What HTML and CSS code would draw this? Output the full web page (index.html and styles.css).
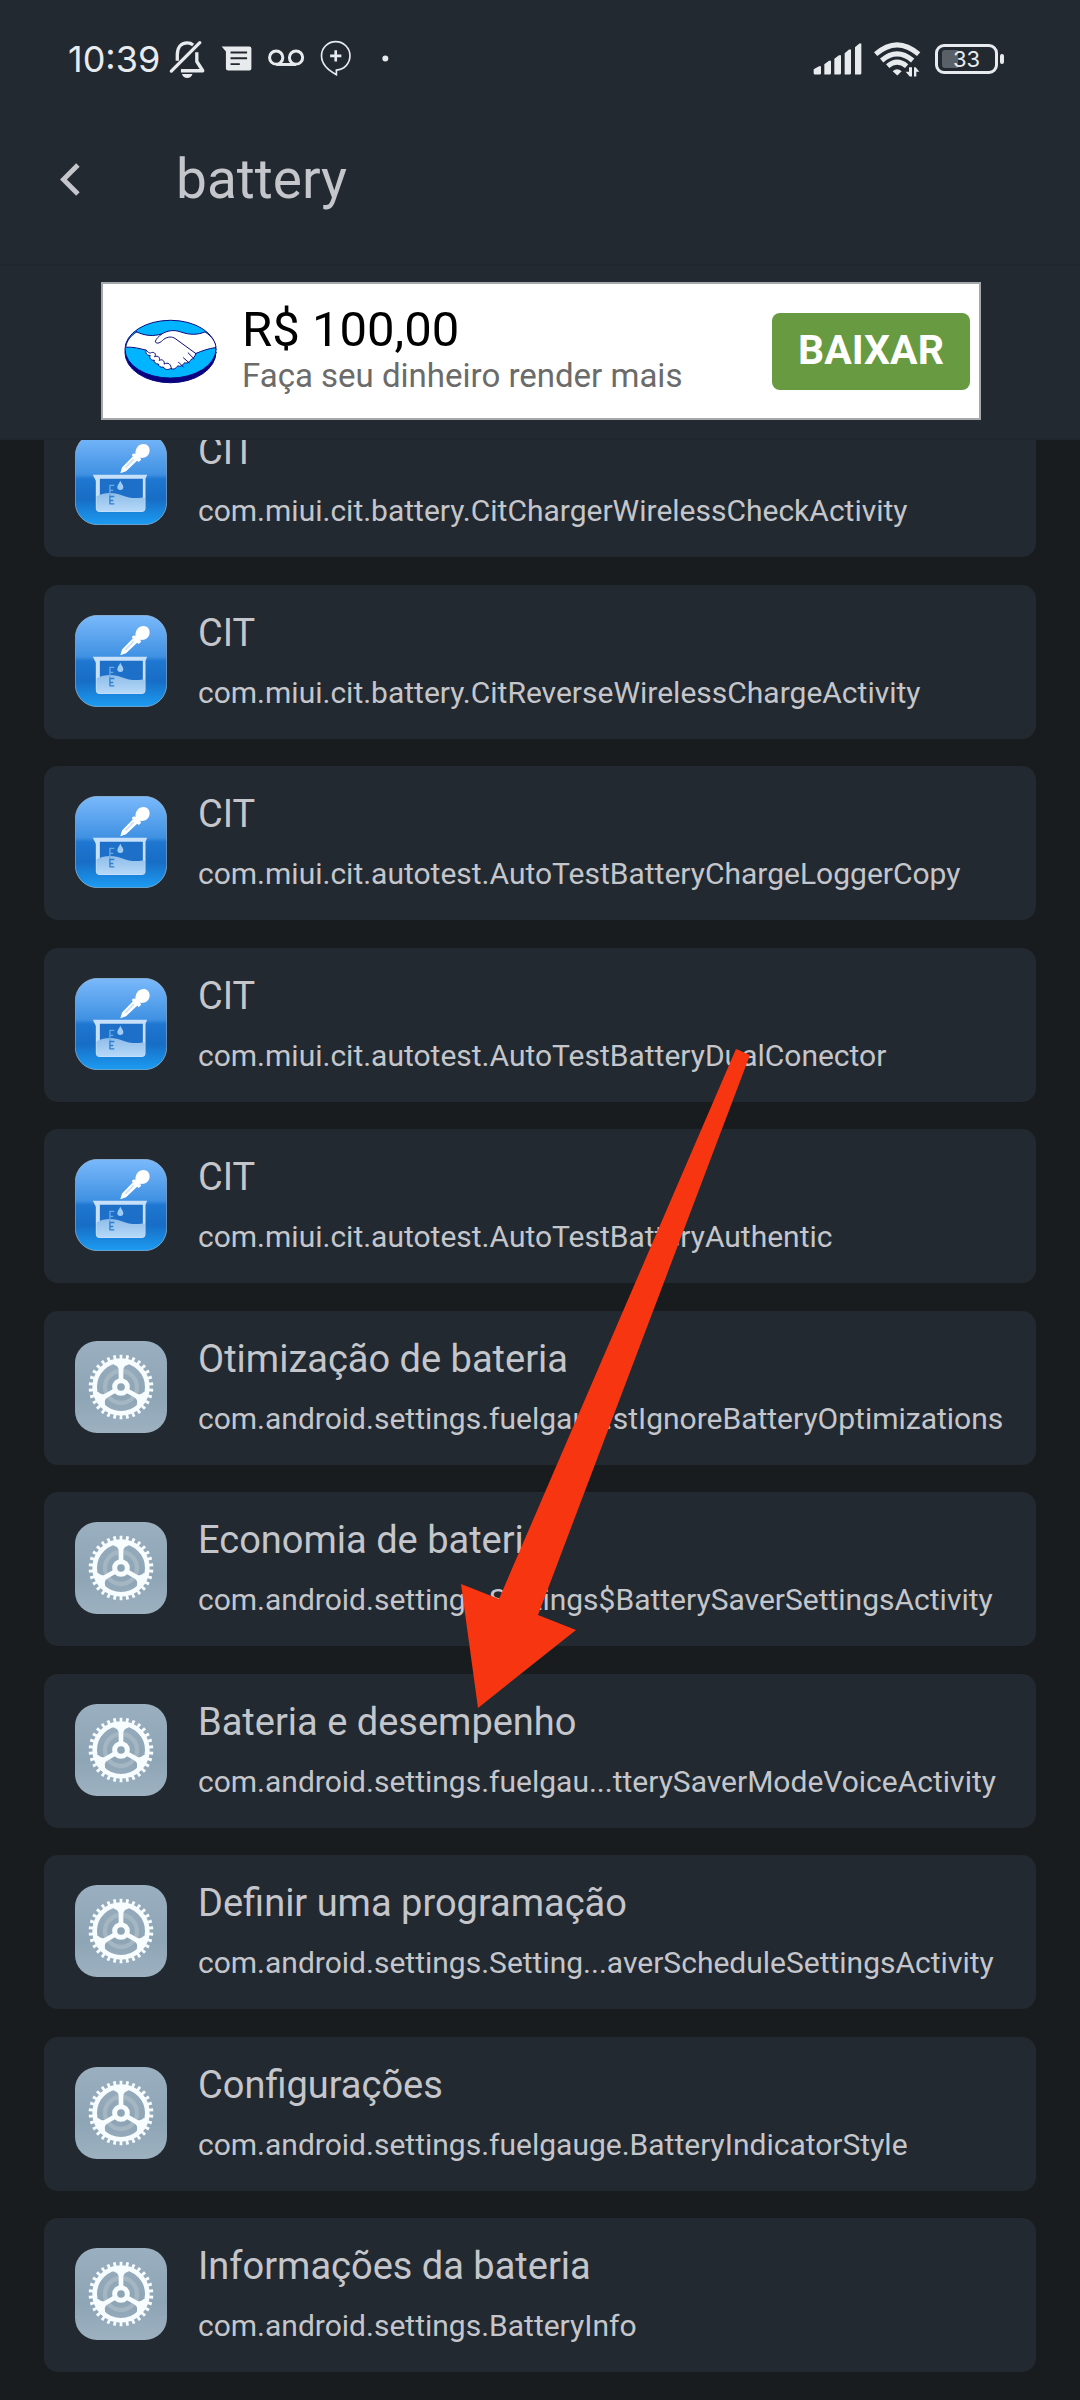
FILE: index.html
```html
<!DOCTYPE html>
<html lang="pt-BR">
<head>
<meta charset="utf-8">
<meta name="viewport" content="width=device-width, initial-scale=1">
<title>battery</title>
<link rel="stylesheet" href="styles.css">
</head>
<body>
<svg class="defs" aria-hidden="true">
  <defs>
    <linearGradient id="sky" x1="0" y1="0" x2="0" y2="1">
      <stop offset="0" stop-color="#7ab9fb"/><stop offset=".45" stop-color="#4091e3"/>
      <stop offset=".5" stop-color="#1f77d1"/><stop offset=".72" stop-color="#186dc5"/><stop offset="1" stop-color="#1c9cf2"/>
    </linearGradient>
    <linearGradient id="water" x1="0" y1="0" x2="0" y2="1">
      <stop offset="0" stop-color="#8fbde9"/><stop offset="1" stop-color="#b5d8f8"/>
    </linearGradient>
    <linearGradient id="steel" x1="0" y1="0" x2="0" y2="1">
      <stop offset="0" stop-color="#9aafbf"/><stop offset=".6" stop-color="#8ea5b6"/><stop offset="1" stop-color="#9db1c0"/>
    </linearGradient>
    <symbol id="cit" viewBox="46 48 274 274">
      <rect x="47" y="49" width="272" height="272" rx="66" fill="url(#sky)" stroke="#9dbbd8" stroke-width="2"/>
      <path d="M181 168l5-17 32-33-3-5 7-5 4 3c-1-18 10-30 24-30 12 0 20 10 18 22-2 13-13 21-28 19l3 6-7 6-5-3-33 31z" fill="#fff"/>
      <path d="M194 150l25-26 4 4-25 26z" fill="#cfe4fa"/>
      <path d="M99 172h162l-5 12v87q0 12-12 12H120q-12 0-12-12v-81z" fill="#c6e0fa"/>
      <path d="M120 184h128v88H120z" fill="#1d6fc8"/>
      <path d="M110 237c34-18 62-8 86 0 20 7 35 5 52 3h6v31q0 10-10 10H120q-10 0-10-10z" fill="url(#water)"/>
      <path d="M163 204h-13v30M150 219h10" fill="none" stroke="#6aa9e4" stroke-width="4"/>
      <path d="M150 234v26M150 237h13M150 249h10M150 259h13" fill="none" stroke="#2f7fd0" stroke-width="4"/>
      <path d="M181 190c5 10 9 14 9 19a9 9 0 0 1-18 0c0-5 4-9 9-19z" fill="#9fcbf5"/>
    </symbol>
    <symbol id="gear" viewBox="45 66 276 276">
      <rect x="45" y="66" width="276" height="276" rx="66" fill="url(#steel)"/>
      <circle cx="183" cy="204" r="48" fill="none" stroke="#a5b6c3" stroke-width="13"/>
      <circle cx="183" cy="204" r="79" fill="none" stroke="#f7fcff" stroke-width="14"/>
      <circle cx="183" cy="204" r="90" fill="none" stroke="#f7fcff" stroke-width="14" pathLength="300" stroke-dasharray="4.4 5.6" stroke-dashoffset="7.2"/>
      <g fill="#f7fcff">
        <path id="arm" d="M176 182v-30q-1-12-14-15l-8-14h58l-8 14q-13 3-14 15v30z"/>
        <use href="#arm" transform="rotate(120 183 204)"/>
        <use href="#arm" transform="rotate(240 183 204)"/>
      </g>
      <circle cx="183" cy="204" r="19" fill="#8ea5b6" stroke="#f7fcff" stroke-width="15"/>
    </symbol>
  </defs>
</svg>

<header class="top">
  <div class="status">
    <span class="clock">10:39</span>
    <svg class="glyphs" viewBox="380 55 670 130" aria-hidden="true" fill="none" stroke="#e8ebee">
      <path d="M388 155l86-86" stroke-width="10" stroke-linecap="round"/>
      <path d="M406 124v-18c0-22 10-36 30-36 8 0 13 2 18 6M465 98v28l18 28h-66" stroke-width="10" stroke-linejoin="round"/>
      <path d="M420 164h32q-4 12-16 12t-16-12z" fill="#e8ebee" stroke="none"/>
      <path d="M540 81h84q6 0 6 6v60q0 6-6 6h-64q-7 0-7-6v-51z" fill="#e8ebee" stroke="none"/>
      <path d="M567 99h50M567 116h50M567 134h28" stroke="#222930" stroke-width="6"/>
      <circle cx="705" cy="114" r="20" stroke-width="9"/><circle cx="765" cy="114" r="20" stroke-width="9"/>
      <path d="M705 135h60" stroke-width="9"/>
      <path d="M887 166v-14c24-2 41-20 41-43 0-24-19-43-43-43s-43 19-43 43c0 28 24 46 45 57z" stroke-width="5"/>
      <path d="M885 92v34M868 109h34" stroke-width="8"/>
      <circle cx="1035" cy="117" r="9" fill="#e8ebee" stroke="none"/>
    </svg>
    <span class="spacer"></span>
    <svg class="signal" viewBox="98 65 324 110" aria-hidden="true" fill="#e8ebee">
      <path d="M100 164v-15l16-9h6v21q0 4-4 4h-14q-4 0-4-4zM132 164v-30l14-10h6v37q0 4-4 4h-16zM162 164v-46l14-11h6v54q0 4-4 4h-16zM193 164v-63l13-11h6v71q0 4-4 4h-15zM224 164v-81l13-11h6v89q0 4-4 4h-15z"/>
      <g fill="none" stroke="#e8ebee" stroke-width="15">
        <path d="M286 104q64-56 129 0M304 123q46-40 93 0M322 140q28-24 57 0"/>
      </g>
      <path d="M337 155q13-11 27 0l-13 13z"/>
      <path d="M386 143h9v28h-7l-12-14h10zM401 171v-28h5l11 14h-9v14z"/>
    </svg>
    <span class="battery"><span class="level">33</span></span>
  </div>
  <div class="search">
    <button class="back" type="button" aria-label="Voltar">
      <svg viewBox="0 0 60 100" aria-hidden="true"><path d="M54 6L10 50l44 44" fill="none" stroke="#c4c6cb" stroke-width="15"/></svg>
    </button>
    <input class="query" type="text" value="battery" aria-label="Pesquisar">
  </div>
  <div class="banner">
    <div class="ad">
      <svg class="logo" viewBox="100 146 280 194" aria-hidden="true" stroke="#0a0a80" stroke-width="3" stroke-linejoin="round" stroke-linecap="round">
        <ellipse cx="240" cy="246" rx="137" ry="91" fill="#0a0080"/>
        <ellipse cx="240" cy="236" rx="137" ry="87" fill="#00b4ff"/>
        <path d="M138 184c25 12 50 14 76 6 16-9 34-14 56-6 30 10 52 9 74 0 22 15 31 29 33 47-22 3-40 9-61 18-2 10-8 16-14 18-6 10-13 12-20 10-6 10-14 12-20 9-6 9-14 12-22 8-8 6-18 3-21-4-9 2-15-3-15-9-9 0-14-6-13-12-9 2-16-6-12-14-10 0-15-6-12-16-20-5-38-10-62-9 3-18 13-33 33-46z" fill="#fff"/>
        <path d="M214 190c-10 8-18 15-20 24 7 8 16 2 25-7 13-10 26-9 35-3l62 45M167 239c6 9 14 10 16 7 10-2 15 6 9 13 10-5 18 2 14 11 8-5 17 0 15 11 12-7 20 0 22 14M264 275l15 15M279 262l18 16M293 247l18 18" fill="none"/>
      </svg>
      <div class="pitch">
        <strong class="price">R$ 100,00</strong>
        <span class="tagline">Faça seu dinheiro render mais</span>
      </div>
      <button class="install" type="button">BAIXAR</button>
    </div>
  </div>
</header>

<main class="results">
  <ul class="list">
    <li class="card"><svg class="icon" aria-hidden="true"><use href="#cit"/></svg><div class="text"><span class="name">CIT</span><span class="path">com.miui.cit.battery.CitChargerWirelessCheckActivity</span></div></li>
    <li class="card"><svg class="icon" aria-hidden="true"><use href="#cit"/></svg><div class="text"><span class="name">CIT</span><span class="path">com.miui.cit.battery.CitReverseWirelessChargeActivity</span></div></li>
    <li class="card"><svg class="icon" aria-hidden="true"><use href="#cit"/></svg><div class="text"><span class="name">CIT</span><span class="path">com.miui.cit.autotest.AutoTestBatteryChargeLoggerCopy</span></div></li>
    <li class="card"><svg class="icon" aria-hidden="true"><use href="#cit"/></svg><div class="text"><span class="name">CIT</span><span class="path">com.miui.cit.autotest.AutoTestBatteryDualConector</span></div></li>
    <li class="card"><svg class="icon" aria-hidden="true"><use href="#cit"/></svg><div class="text"><span class="name">CIT</span><span class="path">com.miui.cit.autotest.AutoTestBatteryAuthentic</span></div></li>
    <li class="card"><svg class="icon" aria-hidden="true"><use href="#gear"/></svg><div class="text"><span class="name">Otimização de bateria</span><span class="path">com.android.settings.fuelgau...stIgnoreBatteryOptimizations</span></div></li>
    <li class="card"><svg class="icon" aria-hidden="true"><use href="#gear"/></svg><div class="text"><span class="name">Economia de bateria</span><span class="path">com.android.settings.Settings$BatterySaverSettingsActivity</span></div></li>
    <li class="card"><svg class="icon" aria-hidden="true"><use href="#gear"/></svg><div class="text"><span class="name">Bateria e desempenho</span><span class="path">com.android.settings.fuelgau...tterySaverModeVoiceActivity</span></div></li>
    <li class="card"><svg class="icon" aria-hidden="true"><use href="#gear"/></svg><div class="text"><span class="name">Definir uma programação</span><span class="path">com.android.settings.Setting...averScheduleSettingsActivity</span></div></li>
    <li class="card"><svg class="icon" aria-hidden="true"><use href="#gear"/></svg><div class="text"><span class="name">Configurações</span><span class="path">com.android.settings.fuelgauge.BatteryIndicatorStyle</span></div></li>
    <li class="card"><svg class="icon" aria-hidden="true"><use href="#gear"/></svg><div class="text"><span class="name">Informações da bateria</span><span class="path">com.android.settings.BatteryInfo</span></div></li>
  </ul>
</main>

<svg class="arrow" viewBox="460 1049 117 660" aria-hidden="true"><path d="M736 1049l14 6-212 560 38 15-98 78-17-124 38 15z" fill="#f73511"/></svg>
</body>
</html>
```
FILE: styles.css
```css
* { box-sizing: border-box; }

body {
  position: relative;
  display: flex;
  flex-direction: column;
  min-height: 100vh;
  margin: 0;
  background: #191c1f;
  color: #c4c6cb;
  font-family: Roboto, sans-serif;
}

.defs { position: absolute; width: 0; height: 0; }

/* Header */
.top {
  position: sticky;
  top: 0;
  z-index: 1;
  background: #222930;
}

.status {
  display: flex;
  align-items: center;
  height: 118px;
  padding: 0 82px 0 68px;
  color: #e8ebee;
}

.clock {
  font-family: Inter, sans-serif;
  font-size: 36px;
  font-weight: 400;
  line-height: 40px;
}

.glyphs { width: 223px; height: 43px; margin-left: 8px; }
.spacer { flex: 1; }
.signal { width: 108px; height: 37px; margin-right: 14px; }

.battery {
  position: relative;
  display: flex;
  width: 63px;
  height: 30px;
  padding: 3px 4px;
  border: 3px solid #e8ebee;
  border-radius: 9px;
}

.battery::after {
  content: "";
  position: absolute;
  top: 7px;
  right: -9px;
  width: 4px;
  height: 10px;
  border-radius: 2px;
  background: #e8ebee;
}

.level {
  flex: 1;
  border-radius: 3px;
  background: linear-gradient(90deg, #596067 33%, transparent 33%);
  font-family: Inter, sans-serif;
  font-size: 22px;
  font-weight: 400;
  line-height: 18px;
  text-align: center;
}

.search {
  display: flex;
  align-items: center;
  height: 148px;
  padding: 0 60px 24px;
  border-bottom: 2px solid #20262c;
}

.back {
  display: flex;
  padding: 0;
  border: 0;
  background: none;
}

.back svg { width: 20px; height: 33px; }

.query {
  flex: 1;
  min-width: 0;
  height: 72px;
  margin-left: 96px;
  padding: 0;
  border: 0;
  outline: 0;
  background: none;
  color: inherit;
  font: 400 55px/72px Roboto, sans-serif;
}

.banner {
  padding: 16px 99px 18px 101px;
  border-bottom: 2px solid #20262c;
}

.ad {
  display: flex;
  align-items: center;
  height: 138px;
  padding: 0 9px 0 21px;
  border: 2px solid #a5a9ab;
  background: #fff;
}

.logo { width: 93px; height: 65px; }

.pitch {
  display: flex;
  flex: 1;
  flex-direction: column;
  margin-left: 25px;
}

.price { color: #000; font-size: 49px; font-weight: 400; line-height: 50px; }
.tagline { color: #6b6b6b; font-size: 33px; line-height: 42px; }

.install {
  width: 198px;
  height: 77px;
  padding: 0 0 2px;
  border: 0;
  border-radius: 8px;
  background: #689a41;
  color: #fff;
  font: 700 41px/48px Roboto, sans-serif;
}

/* Results, scrolled part of the way under the header */
.results {
  display: flex;
  flex: 1;
  margin-top: -37px;
  padding: 0 44px 28px;
}

.list {
  display: flex;
  flex: 1;
  flex-direction: column;
  justify-content: space-between;
  gap: 27px;
  min-width: 0;
  margin: 0;
  padding: 0;
  list-style: none;
}

.card {
  display: flex;
  align-items: center;
  gap: 31px;
  padding: 24px 31px 26px;
  border-radius: 14px;
  background: #222930;
}

.icon { flex: none; width: 92px; height: 92px; }

.text {
  display: flex;
  flex-direction: column;
  gap: 16px;
  min-width: 0;
  white-space: nowrap;
}

.name { font-size: 38px; line-height: 48px; }
.path { font-size: 30px; line-height: 40px; }

/* Marker pointing at "Bateria e desempenho" */
.arrow {
  position: absolute;
  z-index: 2;
  top: 1049px;
  left: 460px;
  width: 117px;
  height: 660px;
  overflow: visible;
}
```
